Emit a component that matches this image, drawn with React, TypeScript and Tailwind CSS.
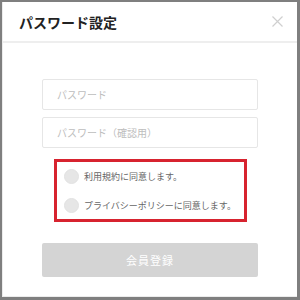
import { useState } from "react";

export default function App() {
  const [terms, setTerms] = useState(false);
  const [privacy, setPrivacy] = useState(false);

  const font = { fontFamily: '"Noto Sans CJK JP", "Noto Sans", sans-serif' };

  return (
    <div className="w-[300px] h-[300px] bg-[#7f7f7f] pt-[2px] pl-[2px] pr-[3px] pb-[3px]" style={font}>
      <div className="w-full h-full bg-white border-l border-b border-[#ececec] flex flex-col">
        {/* header */}
        <header className="h-[41px] flex items-center justify-between pl-[16px] pr-[14px] border-b-2 border-[#eeeeee]">
          <h1 className="text-[14px] font-bold text-[#222] leading-none">パスワード設定</h1>
          <button className="w-[11px] h-[11px] text-[#cfcfcf]">
            <svg viewBox="0 0 11 11" className="w-full h-full" stroke="currentColor" strokeWidth="1.2">
              <path d="M0.5 0.5 L10.5 10.5 M10.5 0.5 L0.5 10.5" />
            </svg>
          </button>
        </header>

        <div className="flex flex-col px-[39px] pt-[36px]">
          <input
            type="password"
            placeholder="パスワード"
            className="h-[31px] w-full border border-[#e6e6e6] rounded-[2px] px-[14px] text-[10px] placeholder:text-[#bdbdbd] outline-none"
          />
          <input
            type="password"
            placeholder="パスワード（確認用）"
            className="h-[31px] w-full border border-[#e6e6e6] rounded-[2px] px-[14px] text-[10px] placeholder:text-[#bdbdbd] outline-none mt-[7px]"
          />

          <div className="mt-[11px] mx-[12px] w-[193px] h-[63px] border-[3px] border-[#d7232f] flex flex-col justify-center gap-[14px] pl-[7px]">
            <label className="flex items-center gap-[5px] cursor-pointer" onClick={() => setTerms(!terms)}>
              <span className={`shrink-0 w-[15px] h-[15px] rounded-full border border-[#e2e2e2] ${terms ? "bg-[#999]" : "bg-[#e6e6e6]"}`} />
              <span className="whitespace-nowrap text-[9px] text-[#666] leading-none">利用規約に同意します。</span>
            </label>
            <label className="flex items-center gap-[5px] cursor-pointer" onClick={() => setPrivacy(!privacy)}>
              <span className={`shrink-0 w-[15px] h-[15px] rounded-full border border-[#e2e2e2] ${privacy ? "bg-[#999]" : "bg-[#e6e6e6]"}`} />
              <span className="whitespace-nowrap text-[9px] text-[#666] leading-none">プライバシーポリシーに同意します。</span>
            </label>
          </div>

          <button
            disabled
            className="mt-[21px] h-[34px] w-full bg-[#d4d4d4] rounded-[2px] text-white text-[11px] tracking-[1px]"
          >
            会員登録
          </button>
        </div>
      </div>
    </div>
  );
}
